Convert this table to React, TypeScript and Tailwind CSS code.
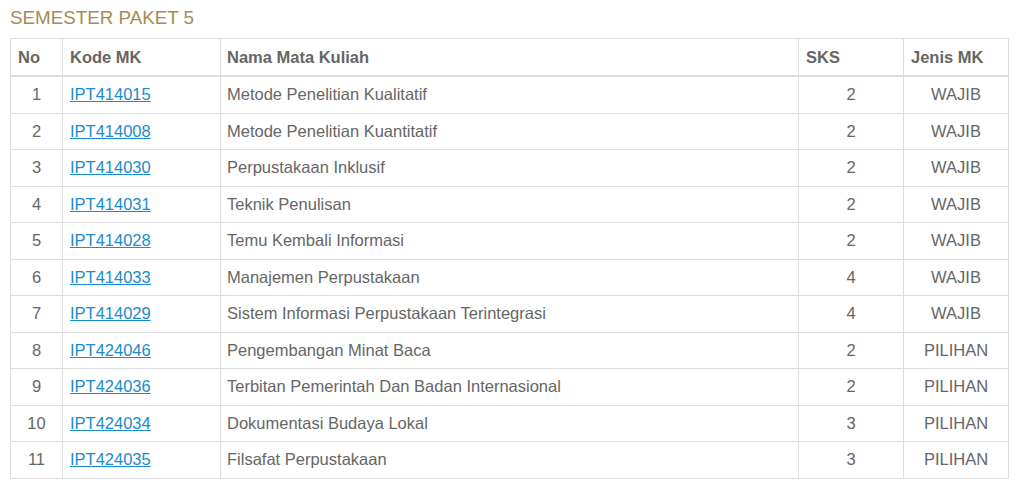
const ROWS = [
  ['IPT414015', 'Metode Penelitian Kualitatif', 2, 'WAJIB'],
  ['IPT414008', 'Metode Penelitian Kuantitatif', 2, 'WAJIB'],
  ['IPT414030', 'Perpustakaan Inklusif', 2, 'WAJIB'],
  ['IPT414031', 'Teknik Penulisan', 2, 'WAJIB'],
  ['IPT414028', 'Temu Kembali Informasi', 2, 'WAJIB'],
  ['IPT414033', 'Manajemen Perpustakaan', 4, 'WAJIB'],
  ['IPT414029', 'Sistem Informasi Perpustakaan Terintegrasi', 4, 'WAJIB'],
  ['IPT424046', 'Pengembangan Minat Baca', 2, 'PILIHAN'],
  ['IPT424036', 'Terbitan Pemerintah Dan Badan Internasional', 2, 'PILIHAN'],
  ['IPT424034', 'Dokumentasi Budaya Lokal', 3, 'PILIHAN'],
  ['IPT424035', 'Filsafat Perpustakaan', 3, 'PILIHAN'],
] as const

export default function App() {
  return (
    <div className="min-h-[486px] bg-white px-[10px] pt-[6px] font-['Liberation_Sans',Arial,sans-serif] text-[16.5px] text-[#666]">
      <h2 className="mb-[8px] text-[18.8px] leading-[24px] text-[#a88a52]">SEMESTER PAKET 5</h2>
      <table className="w-[998px] table-fixed border-collapse border border-[#ddd]">
        <colgroup>
          <col className="w-[52px]" />
          <col className="w-[158px]" />
          <col className="w-[578px]" />
          <col className="w-[105px]" />
          <col className="w-[105px]" />
        </colgroup>
        <thead>
          <tr className="border-b-2 border-[#ddd] text-left font-bold">
            <th className="border border-b-2 border-[#ddd] px-[7px] py-[8px] leading-[20px]">No</th>
            <th className="border border-b-2 border-[#ddd] px-[7px] py-[8px] leading-[20px]">Kode MK</th>
            <th className="border border-b-2 border-[#ddd] px-[6px] py-[8px] leading-[20px]">Nama Mata Kuliah</th>
            <th className="border border-b-2 border-[#ddd] px-[7px] py-[8px] leading-[20px]">SKS</th>
            <th className="border border-b-2 border-[#ddd] px-[7px] py-[8px] leading-[20px]">Jenis MK</th>
          </tr>
        </thead>
        <tbody>
          {ROWS.map(([kode, nama, sks, jenis], i) => (
            <tr key={kode}>
              <td className="border border-[#ddd] px-[7px] py-[8px] text-center leading-[19.5px]">{i + 1}</td>
              <td className="border border-[#ddd] px-[7px] py-[8px] leading-[19.5px]">
                <a href="#" className="text-[#1a8bcc] underline">{kode}</a>
              </td>
              <td className="border border-[#ddd] px-[6px] py-[8px] leading-[19.5px]">{nama}</td>
              <td className="border border-[#ddd] px-[7px] py-[8px] text-center leading-[19.5px]">{sks}</td>
              <td className="border border-[#ddd] px-[7px] py-[8px] text-center leading-[19.5px]">{jenis}</td>
            </tr>
          ))}
        </tbody>
      </table>
    </div>
  )
}
